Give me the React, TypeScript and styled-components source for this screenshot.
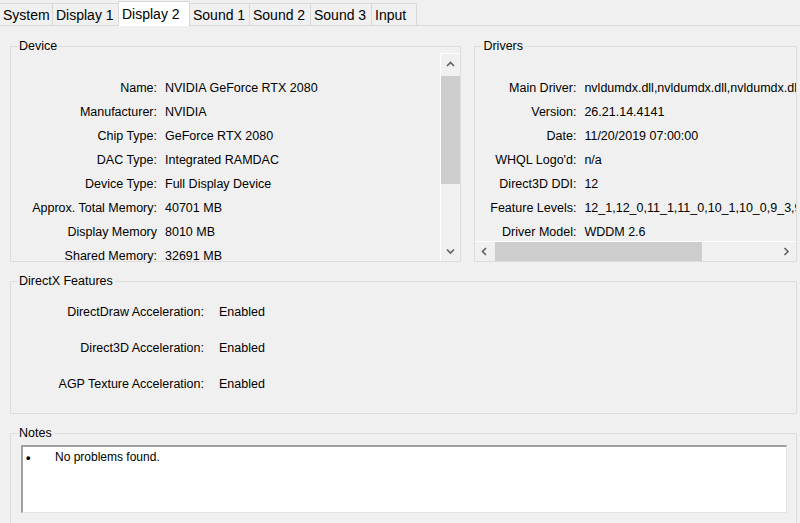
import React from 'react';
import styled, { createGlobalStyle } from 'styled-components';

const GlobalStyle = createGlobalStyle`
  html, body {
    margin: 0;
    padding: 0;
    background: #f0f0f0;
  }
  * {
    box-sizing: border-box;
  }
`;

const Window = styled.div`
  width: 800px;
  height: 523px;
  overflow: hidden;
  background: #f0f0f0;
  font-family: 'Liberation Sans', Arial, sans-serif;
  font-size: 12.5px;
  color: #000;
`;

const TabStrip = styled.div`
  display: flex;
  align-items: flex-end;
  height: 26px;
  border-bottom: 1px solid #d9d9d9;
`;

const Tab = styled.div<{ $active?: boolean; $width: number }>`
  width: ${(p) => p.$width}px;
  height: ${(p) => (p.$active ? 25 : 22)}px;
  margin-bottom: ${(p) => (p.$active ? -1 : 0)}px;
  margin-left: -1px;
  padding-left: 3px;
  padding-top: ${(p) => (p.$active ? 3 : 2)}px;
  font-size: 14px;
  line-height: 18px;
  background: ${(p) => (p.$active ? '#fff' : '#f0f0f0')};
  border: 1px solid #d9d9d9;
  border-bottom: none;
  position: relative;
  z-index: ${(p) => (p.$active ? 1 : 0)};

  &:first-child {
    margin-left: 0;
    border-left: none;
  }
`;

const Panel = styled.div`
  padding: 13px 3px 0 10px;
  display: flex;
  flex-direction: column;
  gap: 12px;
`;

const TopRow = styled.div`
  display: flex;
  gap: 13px;
`;

const Group = styled.fieldset<{ $width?: number }>`
  margin: 0;
  padding: 0;
  border: 1px solid #dcdcdc;
  min-width: 0;
  width: ${(p) => (p.$width ? `${p.$width}px` : 'auto')};
`;

const Legend = styled.legend`
  margin-left: 7px;
  padding: 0 2px 0 1px;
  font-size: 12.5px;
  line-height: 14px;
`;

const ListArea = styled.div<{ $height: number; $clip?: boolean }>`
  display: flex;
  height: ${(p) => p.$height}px;
  overflow: ${(p) => (p.$clip ? 'hidden' : 'visible')};
`;

const ListColumn = styled.div<{ $clip?: boolean }>`
  flex: 1;
  display: flex;
  flex-direction: column;
  min-width: 0;
  overflow: ${(p) => (p.$clip ? 'hidden' : 'visible')};
`;

const InfoRows = styled.div<{
  $labelWidth: number;
  $gap: number;
  $rowGap: number;
  $top: number;
  $rowHeight: number;
}>`
  display: grid;
  grid-template-columns: ${(p) => p.$labelWidth}px auto;
  column-gap: ${(p) => p.$gap}px;
  row-gap: ${(p) => p.$rowGap}px;
  grid-auto-rows: ${(p) => p.$rowHeight}px;
  align-items: center;
  line-height: ${(p) => p.$rowHeight}px;
  padding-top: ${(p) => p.$top}px;
  flex: 1;
  min-height: 0;
  white-space: nowrap;
`;

const Label = styled.div`
  text-align: right;
`;

const Value = styled.div``;

const VScroll = styled.div`
  width: 20px;
  display: flex;
  flex-direction: column;
  background: #f0f0f0;
  border-left: 1px solid #fff;
  border-top: 1px solid #fff;
`;

const HScroll = styled.div`
  flex: 0 0 20px;
  display: flex;
  background: #f0f0f0;
  border-top: 1px solid #fff;
`;

const ArrowButton = styled.div<{ $size: number }>`
  flex: 0 0 ${(p) => p.$size}px;
  display: flex;
  align-items: center;
  justify-content: center;
`;

const Track = styled.div<{ $vertical?: boolean }>`
  flex: 1;
  display: flex;
  flex-direction: ${(p) => (p.$vertical ? 'column' : 'row')};
  padding: ${(p) => (p.$vertical ? '1px 0 0 0' : '0 0 0 1px')};
`;

const Thumb = styled.div<{ $vertical?: boolean; $size: number }>`
  background: #cdcdcd;
  ${(p) => (p.$vertical ? `height: ${p.$size}px;` : `width: ${p.$size}px;`)}
`;

const FeatureBody = styled.div`
  height: 125px;
`;

const NotesBody = styled.div`
  padding: 5px 9px 12px 10px;
`;

const NotesBox = styled.div`
  height: 68px;
  background: #fff;
  border-top: 2px solid #a0a0a0;
  border-left: 2px solid #a0a0a0;
  border-right: 1px solid #e3e3e3;
  border-bottom: 1px solid #e3e3e3;
  padding: 3px 0 0 3px;
  display: flex;
  font-size: 12px;
  line-height: 15px;
`;

const Bullet = styled.span`
  width: 29px;
  font-size: 13px;
  font-weight: bold;
`;

const Chevron = ({ dir }: { dir: 'up' | 'down' | 'left' | 'right' }) => {
  const pts = {
    up: '1,5 4.5,1.5 8,5',
    down: '1,1.5 4.5,5 8,1.5',
    left: '5,1 1.5,4.5 5,8',
    right: '1.5,1 5,4.5 1.5,8',
  }[dir];
  const vertical = dir === 'up' || dir === 'down';
  return (
    <svg width={vertical ? 9 : 7} height={vertical ? 7 : 9} viewBox={vertical ? '0 0 9 7' : '0 0 7 9'}>
      <polyline points={pts} fill="none" stroke="#606060" strokeWidth="1.6" />
    </svg>
  );
};

const tabs: [string, number][] = [
  ['System', 53],
  ['Display 1', 67],
  ['Display 2', 72],
  ['Sound 1', 61],
  ['Sound 2', 62],
  ['Sound 3', 62],
  ['Input', 46],
];

const device: [string, string][] = [
  ['Name:', 'NVIDIA GeForce RTX 2080'],
  ['Manufacturer:', 'NVIDIA'],
  ['Chip Type:', 'GeForce RTX 2080'],
  ['DAC Type:', 'Integrated RAMDAC'],
  ['Device Type:', 'Full Display Device'],
  ['Approx. Total Memory:', '40701 MB'],
  ['Display Memory', '8010 MB'],
  ['Shared Memory:', '32691 MB'],
];

const drivers: [string, string][] = [
  ['Main Driver:', 'nvldumdx.dll,nvldumdx.dll,nvldumdx.dll,nvldumdx.dll'],
  ['Version:', '26.21.14.4141'],
  ['Date:', '11/20/2019 07:00:00'],
  ["WHQL Logo'd:", 'n/a'],
  ['Direct3D DDI:', '12'],
  ['Feature Levels:', '12_1,12_0,11_1,11_0,10_1,10_0,9_3,9_2,9_1'],
  ['Driver Model:', 'WDDM 2.6'],
];

const features: [string, string][] = [
  ['DirectDraw Acceleration:', 'Enabled'],
  ['Direct3D Acceleration:', 'Enabled'],
  ['AGP Texture Acceleration:', 'Enabled'],
];

const Rows = ({ items }: { items: [string, string][] }) => (
  <>
    {items.map(([l, v]) => (
      <React.Fragment key={l}>
        <Label>{l}</Label>
        <Value>{v}</Value>
      </React.Fragment>
    ))}
  </>
);

export default function App() {
  return (
    <Window>
      <GlobalStyle />
      <TabStrip>
        {tabs.map(([name, w]) => (
          <Tab key={name} $width={w} $active={name === 'Display 2'}>
            {name}
          </Tab>
        ))}
      </TabStrip>
      <Panel>
        <TopRow>
          <Group $width={452}>
            <Legend>Device</Legend>
            <ListArea $height={208}>
              <ListColumn>
                <InfoRows $labelWidth={146} $gap={8} $rowGap={14} $rowHeight={10} $top={30}>
                  <Rows items={device} />
                </InfoRows>
              </ListColumn>
              <VScroll>
                <ArrowButton $size={21}>
                  <Chevron dir="up" />
                </ArrowButton>
                <Track $vertical>
                  <Thumb $vertical $size={108} />
                </Track>
                <ArrowButton $size={20}>
                  <Chevron dir="down" />
                </ArrowButton>
              </VScroll>
            </ListArea>
          </Group>
          <Group $width={323}>
            <Legend>Drivers</Legend>
            <ListArea $height={208} $clip>
              <ListColumn $clip>
                <InfoRows $labelWidth={101} $gap={8} $rowGap={14} $rowHeight={10} $top={30}>
                  <Rows items={drivers} />
                </InfoRows>
                <HScroll>
                  <ArrowButton $size={19}>
                    <Chevron dir="left" />
                  </ArrowButton>
                  <Track>
                    <Thumb $size={207} />
                  </Track>
                  <ArrowButton $size={19}>
                    <Chevron dir="right" />
                  </ArrowButton>
                </HScroll>
              </ListColumn>
            </ListArea>
          </Group>
        </TopRow>
        <Group>
          <Legend>DirectX Features</Legend>
          <FeatureBody>
            <InfoRows $labelWidth={193} $gap={15} $rowGap={22} $rowHeight={14} $top={17}>
              <Rows items={features} />
            </InfoRows>
          </FeatureBody>
        </Group>
        <Group>
          <Legend>Notes</Legend>
          <NotesBody>
            <NotesBox>
              <Bullet>•</Bullet>
              <span>No problems found.</span>
            </NotesBox>
          </NotesBody>
        </Group>
      </Panel>
    </Window>
  );
}
